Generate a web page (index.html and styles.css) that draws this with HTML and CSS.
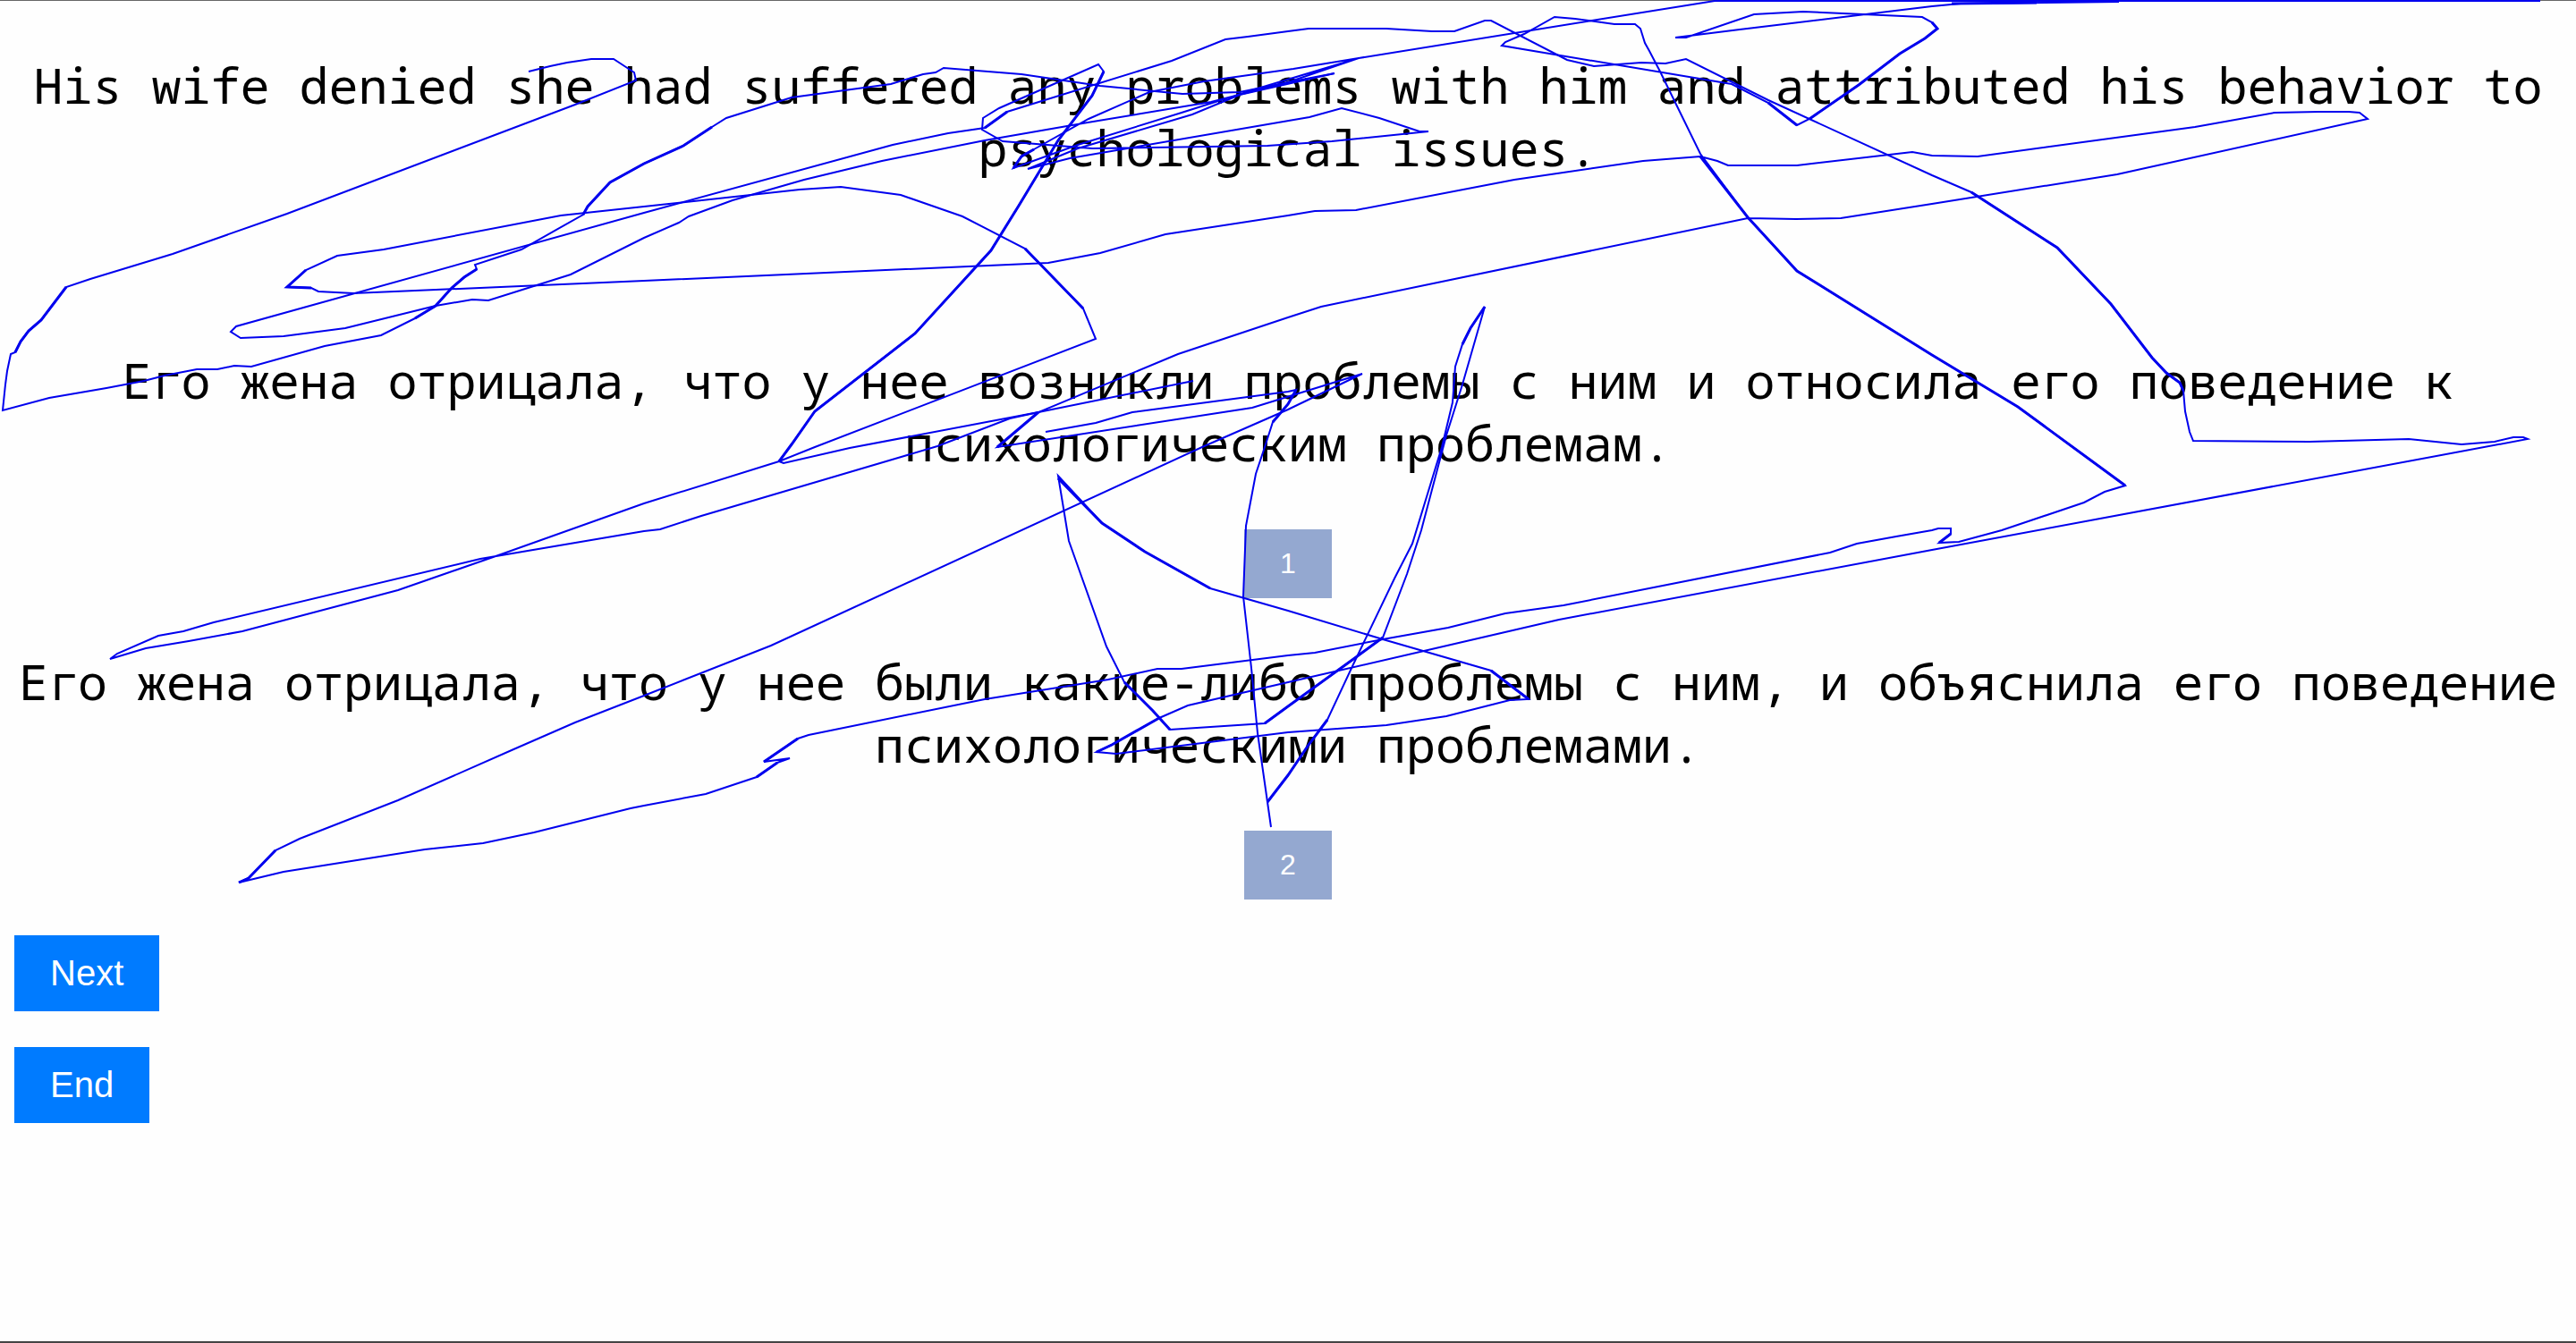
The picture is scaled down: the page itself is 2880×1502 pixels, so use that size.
FILE: index.html
```html
<!DOCTYPE html>
<html lang="en">
<head>
<meta charset="utf-8">
<meta name="viewport" content="width=device-width, initial-scale=1">
<title>Translation choice</title>
<link rel="stylesheet" href="styles.css">
</head>
<body>
<main class="page">
  <p class="sentence source">His wife denied she had suffered any problems with him and attributed his behavior to psychological issues.</p>
  <section class="option" lang="ru">
    <p class="sentence">Его жена отрицала, что у нее возникли проблемы с ним и относила его поведение к психологическим проблемам.</p>
    <button class="button choice" type="button">1</button>
  </section>
  <section class="option" lang="ru">
    <p class="sentence">Его жена отрицала, что у нее были какие-либо проблемы с ним, и объяснила его поведение психологическими проблемами.</p>
    <button class="button choice" type="button">2</button>
  </section>
  <nav class="actions">
    <button class="button action" type="button">Next</button>
    <button class="button action" type="button">End</button>
  </nav>
  <!-- Pointer / gaze trail drawn over the page -->
  <svg class="trail" viewBox="0 0 2880 1502" aria-hidden="true">
    <polyline points="591,80 615,74 634,70 661,66 686,66 709,81 711,90 643,117 321,239 193,284 101,312 74,321 46,358 32,370 23,382 17,394 12,396 8,415 6,430 3,459 55,445 119,434 161,426 184,420 220,413 243,413 262,409 281,410 363,387 426,375 464,356 487,342 505,322 519,310 533,301 531,296 583,279 652,240 657,231 682,204 720,183 764,163 796,142 812,132 885,109 996,94 1032,83 1046,81 1055,76 1142,83 1230,96 1322,105 1386,103 1440,92 1492,82"/>
    <polyline points="1492,82 1386,106 1333,128 1205,166 1149,189 1196,177 1464,131 1500,121 1542,132 1587,147 1597,147 1489,158 1417,163 1221,166 1121,158 1098,145 1099,132 1117,121 1228,72 1234,80 1221,107 1183,157 1139,230 1108,280 1023,373 911,460 885,497 871,516 876,518 950,501 1161,461 1334,426"/>
    <polyline points="2840,1 1917,1 1519,65 1446,77 1346,91 1285,103 1217,133 1156,167 1142,175 1133,188 1205,162 1321,126 1406,99 1519,65 1440,92 1354,114 1216,137 1101,157 986,180 899,201 819,224 770,242 759,249 720,266 638,307 546,336 528,335 487,342 386,367 317,376 269,378 258,371 264,365 720,238 998,162 1060,149 1101,143 1126,125 1310,68 1370,44 1395,41 1440,35 1463,32 1550,32 1601,35 1626,35 1660,23 1667,23 1752,67 1782,74 1835,70 1862,71 1885,66 1977,112 2160,196 2204,215 2300,277 2360,340 2406,400 2422,417 2437,428 2441,437 2443,460 2448,483 2452,493 2582,494 2693,491 2752,497 2789,494 2810,489 2821,489 2826,491 2160,615 1743,693 1592,728 1440,763 1328,789 1296,803 1243,833 1226,841 1248,843 1440,819 1550,811 1617,801 1688,783 1709,782 1667,750 1546,715 1440,683 1353,658 1280,617 1232,585 1183,532 1195,605 1237,723 1257,763 1289,795 1308,816 1414,809 1440,790 1516,735 1546,713 1573,642 1589,593 1617,487 1635,430 1660,343 1644,367 1635,385 1627,410 1624,450 1612,500 1579,608 1559,647 1513,743 1484,805 1463,833 1440,867 1417,897"/>
    <polyline points="871,516 911,500 1225,379 1211,345 1179,312 1146,278 1076,242 1007,218 940,209 894,212 720,231 627,241 429,279 377,286 342,302 321,321 348,322 356,326 395,328 720,314 1172,294 1230,283 1303,262 1440,241 1470,236 1516,235 1693,201 1837,180 1901,175 1920,180 1932,185 2009,185 2138,170 2160,174 2211,175 2454,142 2543,126 2592,125 2626,125 2638,126 2647,133 2367,195 2160,228 2058,244 2008,245 1954,244 1477,343 1440,355 1317,396 1161,461 1115,500 1400,456 1523,418 1440,458 1344,500 862,722 720,778 643,808 572,839 445,895 335,938 308,951 278,982 267,987 317,975 475,950 540,943 597,931 705,904 720,901 789,888 846,869 869,853 883,848 854,852 892,826 904,822 1101,782 1239,760 1294,748 1321,748 1440,733 1470,730 1546,715 1619,702 1683,686 1748,677 2046,618 2076,608 2120,600 2160,593 2167,591 2181,591 2181,597 2168,607 2190,606 2238,593 2330,562 2353,550 2376,543 2256,455 2160,397 2009,303 1954,243 1901,172 1856,80 1844,57 1839,48 1834,32 1828,27 1805,27 1761,21 1738,19 1704,38 1683,47 1679,51 1936,94 1977,115 2009,140 2023,133 2078,95 2124,60 2152,43 2166,32 2160,25 2149,19 2083,16 2016,13 1961,16 1885,42 1873,42 1945,33 2160,7 2192,4 2369,2"/>
    <polyline points="1161,461 1129,468 1048,499 784,577 738,592 720,594 537,625 239,696 205,706 177,711 131,731 123,737 163,725 211,717 271,706 445,660 560,620 720,563 871,516"/>
    <polyline points="1169,483 1225,473 1266,461 1440,438 1449,436 1440,452 1423,472 1414,500 1404,530 1393,588 1390,667 1399,747 1406,820 1417,897 1421,925"/>
    <g class="heavy">
      <polyline points="1234,80 1221,107 1183,157 1139,230 1108,280 1023,373 911,460 885,497 871,516"/>
      <polyline points="1901,175 1954,243 2009,303 2160,397 2256,455 2376,543"/>
      <polyline points="2204,215 2300,277 2360,340 2406,400 2422,417 2437,428 2441,437"/>
      <polyline points="1183,535 1232,585 1280,617 1353,658"/>
      <polyline points="74,321 46,358 32,370 23,382 17,394"/>
      <polyline points="464,356 487,342 505,322 519,310 533,301"/>
      <polyline points="652,240 657,231 682,204 720,183 764,163 796,142"/>
      <polyline points="342,302 321,321 348,322"/>
      <polyline points="308,951 278,982 267,987"/>
      <polyline points="1146,278 1179,312 1211,345"/>
      <polyline points="1257,763 1289,795 1308,816"/>
      <polyline points="1414,809 1440,790 1516,735 1546,713"/>
      <polyline points="1484,805 1463,833 1440,867 1417,897"/>
      <polyline points="1660,343 1644,367 1635,385"/>
      <polyline points="1667,750 1709,782"/>
      <polyline points="1977,115 2009,140"/>
      <polyline points="2023,133 2078,95 2124,60 2152,43 2166,32 2160,25"/>
      <polyline points="1226,841 1243,833 1296,803"/>
      <polyline points="846,869 869,853"/>
      <polyline points="854,852 892,826"/>
      <polyline points="1161,461 1115,500"/>
      <polyline points="1449,436 1440,452 1423,472"/>
      <polyline points="1156,167 1142,175 1133,188"/>
      <polyline points="1101,143 1126,125"/>
      <polyline points="2181,597 2168,607"/>
      <polyline points="2182,4 2277,3"/>
    </g>
  </svg>
</main>
</body>
</html>
```
FILE: styles.css
```css
* {
  box-sizing: border-box;
}

body {
  margin: 0;
  background: #fefefe;
  color: #000;
}

.page {
  position: relative;
  min-height: 100vh;
  padding: 59px 16px 40px;
  border-top: 1px solid #666;
  border-bottom: 2px solid #444;
}

.sentence {
  margin: 0;
  font-family: Consolas, "Noto Sans Mono", "DejaVu Sans Mono", monospace;
  font-size: 55px;
  line-height: 70px;
  text-align: center;
}

.source {
  margin-bottom: 190px;
}

.option {
  display: flex;
  flex-direction: column;
  align-items: center;
  gap: 62px;
}

.option + .option {
  margin-top: 58px;
}

.button {
  padding: 20px 40px;
  border: 0;
  color: #fff;
  font-family: Arial, "Liberation Sans", sans-serif;
  cursor: pointer;
}

.choice {
  background: #94a8d0;
  font-size: 32px;
  line-height: 37px;
}

.actions {
  display: flex;
  flex-direction: column;
  align-items: flex-start;
  gap: 40px;
  margin-top: 40px;
}

.action {
  background: #007bff;
  font-size: 40px;
  line-height: 45px;
}

.trail {
  position: absolute;
  top: -1px;
  left: 0;
  width: 100%;
  height: auto;
  pointer-events: none;
  overflow: hidden;
  fill: none;
  stroke: #0000ee;
  stroke-width: 2;
}

.heavy {
  stroke-width: 3;
}
```
